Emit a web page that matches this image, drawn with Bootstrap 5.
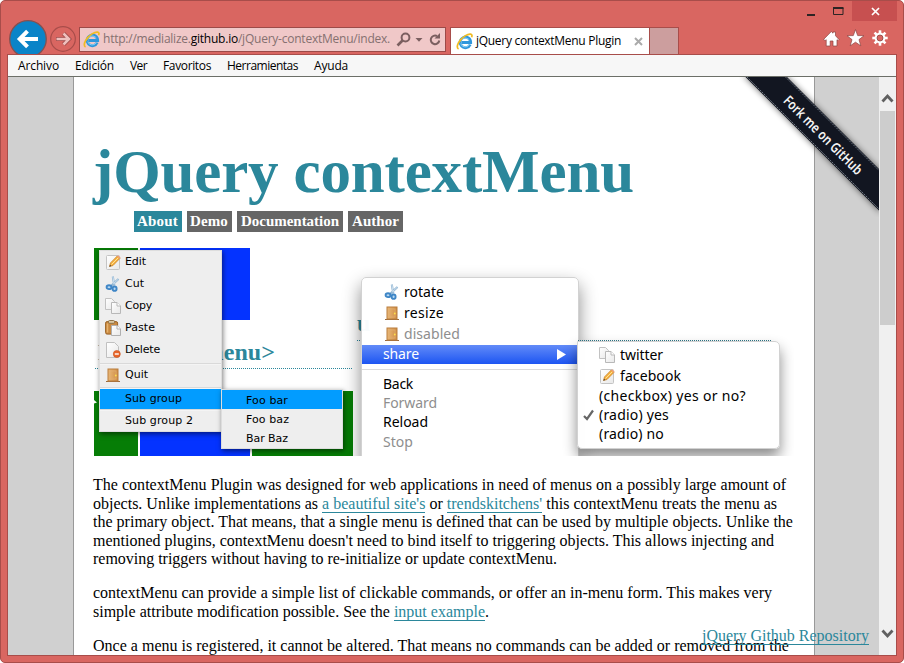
<!DOCTYPE html>
<html lang="es">
<head>
<meta charset="utf-8">
<meta name="viewport" content="width=device-width, initial-scale=1">
<title>jQuery contextMenu Plugin</title>
<link rel="stylesheet" href="https://cdn.jsdelivr.net/npm/bootstrap@5.3.0/dist/css/bootstrap.min.css">
<style>
:root{--red:#d96661;--red-dark:#a84d4a;--teal:#2b879b}
html,body{height:663px;overflow:hidden;background:#fff}
svg{display:block;flex:none}
[data-w]{display:inline-block;white-space:nowrap}
.win{width:904px;height:663px;background:var(--red);border:1px solid var(--red-dark);border-radius:5px;padding:0 7px 7px;font:12px/16px "Open Sans","Noto Sans",sans-serif;color:#000}
.chrome{height:53px}
.nav-tools{padding:18px 0 0 1px}
.addr{width:367px;height:25px;margin-top:26px;background:#f0c8c8;border:1px solid #9c4a48;padding-left:3px;color:#857070}
.tab-on{width:200px;height:27px;margin:26px 0 0 4px;background:#fff;border:1px solid #a84d4a;border-bottom:0;padding-left:5px}
.tab-new{width:29px;height:27px;margin-top:26px;background:#cc9e9e;border:1px solid #a84d4a;border-left:0;border-bottom:0}
.lbl{margin-left:3px;padding-bottom:1px}
.tab-x{margin-right:6px}
.ctl{margin-right:-1px}
.ctl-min{margin:12px 17px 0 0}
.ctl-max{margin:6px 8px 0 0}
.ctl-close{width:45px;height:20px;background:#c75050;padding-left:1px}
.tool-icons{margin:8px 7px 0 auto}
.inner{height:602px;border:1px solid var(--red-dark);margin:0 -1px}
.menus{height:22px;background:#f7f7f7;border-bottom:1px solid #6c6f68;padding-left:10px;gap:16px}
.menus span{line-height:22px;height:21px}
.view{height:578px;background:#d0d0d0;overflow:hidden}
.paper{width:742px;margin-left:65px;background:#fff;border:1px solid #999;border-width:0 1px;padding:57px 0 0 19px;font-family:"Liberation Serif",serif;font-size:16px}
.paper h1{font-size:61px;line-height:76px;height:77px;font-weight:700;color:var(--teal);margin:0}
.tabs4{padding-left:41px;gap:5px}
.tabs4 a{background:#666;color:#fff;font-weight:700;font-size:15px;line-height:21px;height:21px;padding-left:3px;text-decoration:none}
.tabs4 a.on{background:var(--teal)}
.tabs4 .wa{width:48px}.tabs4 .wd{width:45px}.tabs4 .wo{width:106px;padding-left:4px}.tabs4 .wu{width:55px;padding-left:4px}
.paper p{line-height:18.5px;margin:0 0 15.5px;white-space:nowrap}
.paper p a,.repo{color:var(--teal);text-decoration:none;border-bottom:1px solid var(--teal)}
.stage{width:700px;height:208px;margin:16px 0 20px 1px;overflow:hidden}
.pop{position:absolute}
.m1{left:5px;top:2px;width:123px;height:182px;background:#eee;border:1px solid #ddd;box-shadow:1px 2px 5px rgba(0,0,0,.5);font:11px/22px "DejaVu Sans",sans-serif}
.m1 .it{height:22px;padding-left:5px;gap:4px}
.m1 .sep{border-top:1px solid #d9d9d9;border-bottom:1px solid #f4f4f4;height:2px}
.m1 .gap-line{margin-top:2px}
.m1 .it.quit{height:19px;margin-bottom:3px}
.m1 .it.hot{height:20px;line-height:20px}
.m1 .it.last{height:20px;line-height:20px}
.m1 .hot,.m1s .hot{background:#029cff}
.m1s{left:127px;top:141px;width:122px;height:60px;background:#eee;border:1px solid #ddd;box-shadow:1px 2px 5px rgba(0,0,0,.5);font:11px/21px "DejaVu Sans",sans-serif}
.m1s div{height:19px;padding-left:24px}
.m2,.m2s{background:rgba(255,255,255,.97);border:1px solid #d2d2d2;font:14px/19px "Noto Sans",sans-serif;color:#000}
.m2{left:267px;top:29px;width:218px;height:200px;border-radius:5px;padding-top:3px;box-shadow:0 8px 18px rgba(0,0,0,.45)}
.m2 .it{height:21px;padding-left:22px;gap:4px}
.m2 .ln{height:19.2px;padding-left:21px}
.m2 .dim{color:#8e8e8e}
.m2 .share{height:19px;line-height:17px;background:linear-gradient(#628bf8,#1d55f2);color:#fff;padding:0 12px 0 21px;margin-top:1px}
.m2 .share span{padding-bottom:2px}
.m2 .sep{height:1px;background:#dcdcdc;margin:5px 0 4px}
.m2s{left:483px;top:93px;width:203px;height:108px;border-radius:0 5px 5px 5px;padding-top:2px;box-shadow:0 8px 14px rgba(0,0,0,.45)}
.m2s .it{height:21px;padding-left:21px;gap:5px}
.m2s .ln{height:19px;padding-left:4px;gap:1px}
.ribbon{position:absolute;right:17px;top:0}
.repo{position:absolute;right:27px;top:550px;font:16px/17px "Liberation Serif",serif}
.sbar{position:absolute;right:0;top:0;width:17px;height:578px;background:#f0f0f0}
.thumb{width:15px;height:214px;background:#cdcdcd}
</style>
</head>
<body>
<svg width="0" height="0" class="position-absolute" aria-hidden="true">
<defs>
<linearGradient id="gw" x2="1" y2="1"><stop offset="0" stop-color="#fff"/><stop offset="1" stop-color="#e8e8e8"/></linearGradient>
<linearGradient id="go" x2="1" y2="0"><stop offset="0" stop-color="#e9b877"/><stop offset="1" stop-color="#cf8d45"/></linearGradient>
<symbol id="i-ie" viewBox="0 0 16 16"><path d="M13.400 10.800A5 5 0 1 1 13.800 8.900H5.500" fill="none" stroke="#2f97dc" stroke-width="2.700"/><path d="M12.800 10.800A4.600 4.600 0 0 1 4.400 10M4.300 7.800A4.800 4.800 0 0 1 12.500 6.500" fill="none" stroke="#8fd3f5" stroke-width=".9"/><path d="M2.400 15C-.8 13.500 3 6 8.500 2.700 12.500.4 16.200.4 14.700 4" fill="none" stroke="#f0bb22" stroke-width="1.600"/></symbol>
<symbol id="i-edit" viewBox="0 0 16 16"><rect x="1.500" y="1.500" width="13" height="14" rx="1" fill="url(#gw)" stroke="#c4c4c4"/><path d="M4.500 12.500l1-3.600L12.300 2l2.500 2.500L8 11.500z" fill="#f6b23c" stroke="#c98128" stroke-width=".8"/><path d="M6.500 10.500L13.500 3.500" stroke="#ffe09a"/><path d="M12 2.300l1.100-1.100 2.600 2.500-1.100 1.100z" fill="#ee9f77"/><path d="M4.300 12.800l.8-2 1.200 1.200z" fill="#444"/></symbol>
<symbol id="i-cut" viewBox="0 0 16 16"><path d="M7.800.5l1.500 9M13.500 3L6 10" stroke="#8fb4d2" stroke-width="2.100"/><path d="M7.900.8l1.300 7.500M13.200 3.300L8.500 7.700" stroke="#deebf5" stroke-width=".8"/><ellipse cx="4" cy="11.200" rx="2.400" ry="1.900" fill="#b8d8f2" stroke="#3f86c6" stroke-width="1.900"/><ellipse cx="9.600" cy="12.700" rx="2" ry="2.200" fill="#b8d8f2" stroke="#3f86c6" stroke-width="1.900"/></symbol>
<symbol id="i-copy" viewBox="0 0 16 16"><path d="M.5.500h6l3 3v8h-9z" fill="url(#gw)" stroke="#c2c2c2"/><path d="M6.500 4.500h5.500l3.500 3.500v7.500h-9z" fill="url(#gw)" stroke="#b8b8b8"/><path d="M12 4.500V8h3.500" fill="#fff" stroke="#b8b8b8"/></symbol>
<symbol id="i-paste" viewBox="0 0 16 16"><rect x=".6" y="1.600" width="12" height="12.500" rx="1.500" fill="#c98a42" stroke="#9a6224"/><path d="M2.500 3.500v9" stroke="#e6b36f" stroke-width="1.500"/><rect x="3.500" y=".5" width="6" height="2.800" rx="1" fill="#dcc9a4" stroke="#8d7248"/><path d="M6.500 5.500h5.500l3.500 3.500v6.500h-9z" fill="url(#gw)" stroke="#b0b0b0"/><path d="M12 5.500V9h3.500" fill="#fff" stroke="#b0b0b0"/></symbol>
<symbol id="i-del" viewBox="0 0 16 16"><path d="M1.500.500h8l4 4v11h-12z" fill="url(#gw)" stroke="#c0c0c0"/><circle cx="11.800" cy="12" r="3.500" fill="#e8662a" stroke="#c94f18" stroke-width=".6"/><path d="M9.800 12h4" stroke="#fff" stroke-width="1.400"/></symbol>
<symbol id="i-door" viewBox="0 0 16 16"><path d="M1 14.500h14" stroke="#9a6a3c"/><rect x="3" y="2" width="10" height="12" fill="url(#go)" stroke="#b97c3d"/><rect x="5" y="4" width="6" height="8" fill="none" stroke="#e2b075" stroke-width=".6"/><circle cx="10.800" cy="8.500" r=".9" fill="#ffe14a"/></symbol>
</defs>
</svg>

<div class="win">
  <div class="chrome d-flex">
    <div class="nav-tools">
      <svg width="70" height="35" viewBox="9 19 70 35"><circle cx="28" cy="39" r="18.300" fill="#0a84c8" stroke="#86504f" stroke-width="1.300"/><path d="M38 39H21M27.500 31.200L19.700 39l7.800 7.800" fill="none" stroke="#fff" stroke-width="4"/><circle cx="63" cy="39" r="12.300" fill="none" stroke="#a84d4a" stroke-width="1.200"/><path d="M56 39h12M63.500 33.500l5.500 5.500-5.500 5.500" fill="none" stroke="#9c4a48" stroke-width="4.200"/><path d="M56.500 39h12M63.500 33.500l5.500 5.500-5.500 5.500" fill="none" stroke="#efc0be" stroke-width="2.500"/></svg>
    </div>
    <div class="addr d-flex align-items-center">
      <svg width="17" height="17"><use href="#i-ie"/></svg>
      <span class="lbl" data-w="287">http://medialize.<span class="text-black">github.io</span>/jQuery-contextMenu/index.</span>
      <svg width="50" height="18" viewBox="394 31 50 18" fill="none" stroke="#7b5f60" class="ms-1"><circle cx="405.500" cy="37.500" r="3.900" stroke-width="2"/><path d="M402.500 40.500L397.500 45.500" stroke-width="2.600"/><path d="M415.500 38h7l-3.500 3.800z" fill="#7b5f60" stroke="none"/><path d="M437 36A4.300 4.300 0 1 0 439.300 40.500" stroke-width="2"/><path d="M440 33v5.500h-5.500z" fill="#7b5f60" stroke="none"/></svg>
    </div>
    <div class="tab-on d-flex align-items-center">
      <svg width="17" height="17"><use href="#i-ie"/></svg>
      <span class="lbl pb-0" data-w="145">jQuery contextMenu Plugin</span>
      <svg class="ms-auto tab-x" width="9" height="9" viewBox="0 0 9 9"><path d="M1 1l7 7M8 1L1 8" stroke="#aaa" stroke-width="2"/></svg>
    </div>
    <div class="tab-new"></div>
    <div class="ms-auto">
      <div class="ctl d-flex justify-content-end">
        <svg class="ctl-min" width="9" height="3"><rect width="8" height="2" y="1" fill="#2d2424"/></svg>
        <svg class="ctl-max" width="11" height="9"><path d="M.5 1h9.500v6.500H.500z" fill="none" stroke="#2d2424"/><path d="M0 1h10.500" stroke="#2d2424" stroke-width="2"/></svg>
        <div class="ctl-close d-flex align-items-center justify-content-center"><svg width="9" height="9" viewBox="0 0 9 9"><path d="M1 1l7 7M8 1L1 8" stroke="#fff" stroke-width="1.700"/></svg></div>
      </div>
      <svg class="tool-icons" width="66" height="18" viewBox="823 29 66 18" fill="#fff" stroke="#8b4341" stroke-width=".7"><path d="M823.500 39.500l7.800-8 1.700 1.700V32h2.500v3.700l3.500 3.800-1 1-1-.8V46h-4v-5h-2.800v5h-4v-6.300l-1 .8z"/><path d="M855.500 29.500l2.200 6.100 6.300.1-5 3.900 1.800 6.200-5.300-3.600-5.300 3.600 1.800-6.200-5-3.900 6.300-.1z"/><g stroke="none" transform="translate(880 38)"><path d="M-1.300-7.700h2.600v15.400h-2.600z"/><path d="M-1.300-7.700h2.600v15.400h-2.600z" transform="rotate(45)"/><path d="M-1.300-7.700h2.600v15.400h-2.600z" transform="rotate(90)"/><path d="M-1.300-7.700h2.600v15.400h-2.600z" transform="rotate(135)"/><circle r="5.400"/><circle r="3" fill="#d96661" stroke="#8b4341" stroke-width=".8"/></g></svg>
    </div>
  </div>

  <div class="inner">
    <nav class="menus d-flex">
      <span data-w="41">Archivo</span><span data-w="39">Edición</span><span data-w="17">Ver</span><span data-w="48">Favoritos</span><span data-w="71">Herramientas</span><span data-w="34">Ayuda</span>
    </nav>
    <div class="view position-relative">
      <main class="paper">
        <h1><span data-w="541">jQuery contextMenu</span></h1>
        <nav class="tabs4 d-flex">
          <a class="on wa" href="#"><span data-w="41">About</span></a><a class="wd" href="#"><span data-w="38">Demo</span></a><a class="wo" href="#"><span data-w="98">Documentation</span></a><a class="wu" href="#"><span data-w="47">Author</span></a>
        </nav>
        <div class="stage position-relative">
          <svg width="700" height="208" viewBox="94 248 700 208"><path d="M94 248h44v72H94zM94 391h44v65H94zM252 391h101v65H252z" fill="#067d06"/><path d="M140 248h110v72H140zM140 391h110v65H140z" fill="#0433ff"/><path d="M94 400l3 2.500-3 1z" fill="#fff"/><path d="M95 368.500h258M357 340.500h5" stroke="#2b879b" stroke-dasharray="1 1"/><text x="98" y="360" textLength="177" font-family="Liberation Serif" font-weight="700" font-size="24" fill="#2b879b">HTML5 &lt;menu&gt;</text><text x="357" y="331" font-family="Liberation Serif" font-weight="700" font-size="24" fill="#2b879b">u</text></svg>
          <div class="pop m2">
            <div class="it d-flex align-items-center"><svg width="16" height="16"><use href="#i-cut"/></svg><span data-w="40">rotate</span></div>
            <div class="it d-flex align-items-center"><svg width="16" height="16"><use href="#i-door"/></svg><span data-w="40">resize</span></div>
            <div class="it d-flex align-items-center dim"><svg width="16" height="16"><use href="#i-door"/></svg><span data-w="56">disabled</span></div>
            <div class="share d-flex align-items-center justify-content-between"><span data-w="36">share</span><svg width="9" height="11"><path d="M0 0l9 5.500-9 5.500z" fill="#fff"/></svg></div>
            <div class="sep"></div>
            <div class="ln"><span data-w="30">Back</span></div>
            <div class="ln dim"><span data-w="54">Forward</span></div>
            <div class="ln"><span data-w="45">Reload</span></div>
            <div class="ln dim"><span data-w="30">Stop</span></div>
          </div>
          <div class="pop m2s">
            <div class="it d-flex align-items-center"><svg width="16" height="16"><use href="#i-copy"/></svg><span data-w="43">twitter</span></div>
            <div class="it d-flex align-items-center"><svg width="16" height="16"><use href="#i-edit"/></svg><span data-w="61">facebook</span></div>
            <div class="ln d-flex align-items-center"><svg width="16" height="12"></svg><span data-w="147">(checkbox) yes or no?</span></div>
            <div class="ln d-flex align-items-center"><svg width="16" height="12"><path d="M2 7l3 3 6-8.500" fill="none" stroke="#666" stroke-width="2.200"/></svg><span data-w="70">(radio) yes</span></div>
            <div class="ln d-flex align-items-center"><svg width="16" height="12"></svg><span data-w="65">(radio) no</span></div>
          </div>
          <svg class="pop top-0 start-0" width="700" height="100" viewBox="94 248 700 100"><path d="M578 340.500h193" stroke="#2b7080" stroke-dasharray="1 1"/></svg>
          <div class="pop m1">
            <div class="it d-flex align-items-center"><svg width="16" height="16"><use href="#i-edit"/></svg><span data-w="21">Edit</span></div>
            <div class="it d-flex align-items-center"><svg width="16" height="16"><use href="#i-cut"/></svg><span data-w="19">Cut</span></div>
            <div class="it d-flex align-items-center"><svg width="16" height="16"><use href="#i-copy"/></svg><span data-w="27">Copy</span></div>
            <div class="it d-flex align-items-center"><svg width="16" height="16"><use href="#i-paste"/></svg><span data-w="30">Paste</span></div>
            <div class="it d-flex align-items-center"><svg width="16" height="16"><use href="#i-del"/></svg><span data-w="35">Delete</span></div>
            <div class="sep gap-line"></div>
            <div class="it quit d-flex align-items-center"><svg width="16" height="16"><use href="#i-door"/></svg><span data-w="23">Quit</span></div>
            <div class="sep"></div>
            <div class="it d-flex hot"><svg width="16" height="16"></svg><span data-w="57">Sub group</span></div>
            <div class="sep"></div>
            <div class="it d-flex last"><svg width="16" height="16"></svg><span data-w="68">Sub group 2</span></div>
          </div>
          <div class="pop m1s">
            <div class="hot"><span data-w="42">Foo bar</span></div>
            <div><span data-w="43">Foo baz</span></div>
            <div><span data-w="42">Bar Baz</span></div>
          </div>
        </div>
        <p><span data-w="693">The contextMenu Plugin was designed for web applications in need of menus on a possibly large amount of</span><br>
        <span data-w="684">objects. Unlike implementations as <a href="#">a beautiful site's</a> or <a href="#">trendskitchens'</a> this contextMenu treats the menu as</span><br>
        <span data-w="700">the primary object. That means, that a single menu is defined that can be used by multiple objects. Unlike the</span><br>
        <span data-w="681">mentioned plugins, contextMenu doesn't need to bind itself to triggering objects. This allows injecting and</span><br>
        <span data-w="464">removing triggers without having to re-initialize or update contextMenu.</span></p>
        <p><span data-w="679">contextMenu can provide a simple list of clickable commands, or offer an in-menu form. This makes very</span><br>
        <span data-w="396">simple attribute modification possible. See the <a href="#">input example</a>.</span></p>
        <p><span data-w="696">Once a menu is registered, it cannot be altered. That means no commands can be added or removed from the</span></p>
      </main>
      <svg class="ribbon" width="140" height="140" viewBox="739 77 140 140"><defs><filter id="sh" x="-20%" y="-20%" width="140%" height="140%"><feGaussianBlur stdDeviation="3"/></filter></defs><path d="M743 75L881 213V171L785 75z" fill="#000" opacity=".55" filter="url(#sh)"/><path d="M745.500 77L879 210.500V169L787 77z" fill="#121621"/><path d="M747 77L879 209M785.500 77L879 170.500" stroke="#6b7480" stroke-width="1" stroke-dasharray="2 1"/><text transform="translate(782.500 101.500) rotate(45)" textLength="105" font-family="Noto Sans" font-weight="600" font-size="14" lengthAdjust="spacingAndGlyphs" fill="#f4f4f4">Fork me on GitHub</text></svg>
      <a class="repo" href="#"><span data-w="167">jQuery Github Repository</span></a>
      <div class="sbar d-flex flex-column align-items-center justify-content-between">
        <div class="d-flex flex-column align-items-center"><svg width="17" height="34" viewBox="0 0 17 34"><path d="M3.500 24.500L8.500 19l5 5.500" fill="none" stroke="#606060" stroke-width="2.800"/></svg><div class="thumb"></div></div>
        <svg width="17" height="34" viewBox="0 0 17 34"><path d="M3.500 9.500l5 5.500 5-5.500" fill="none" stroke="#606060" stroke-width="2.800"/></svg>
      </div>
    </div>
  </div>
</div>
<script src="https://cdn.jsdelivr.net/npm/bootstrap@5.3.0/dist/js/bootstrap.bundle.min.js"></script>
<script>
// Spread each label's letters so that it fills the width given in data-w.
document.querySelectorAll('[data-w]').forEach(function (el) {
  var gap = (Number(el.dataset.w) - el.getBoundingClientRect().width) / el.textContent.length;
  el.style.letterSpacing = gap.toFixed(3) + 'px';
});
</script>
</body>
</html>
